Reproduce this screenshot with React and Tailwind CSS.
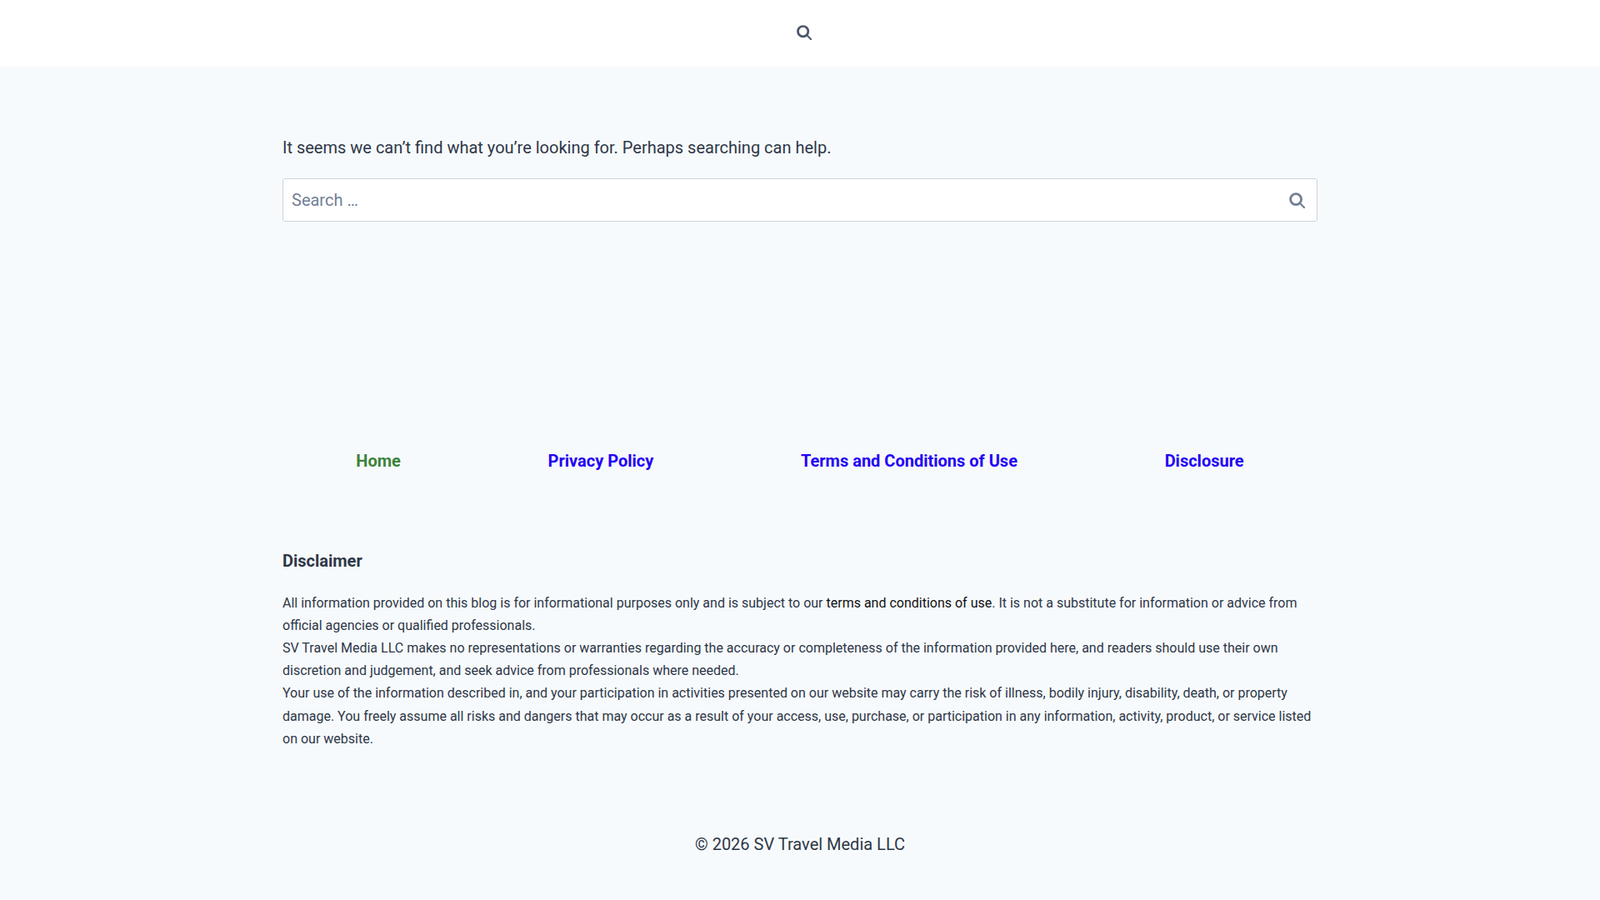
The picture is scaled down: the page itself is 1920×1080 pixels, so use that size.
const SearchIcon = ({ className }) => (
  <svg viewBox="0 0 24 24" fill="none" stroke="currentColor" className={className}>
    <circle cx="10.2" cy="10.2" r="8.2" strokeWidth="3.6" />
    <path d="M16.5 16.5L22.7 22.7" strokeWidth="2.8" strokeLinecap="round" />
  </svg>
);

const navLinks = [
  { label: "Home", color: "text-[#3b833b]" },
  { label: "Privacy Policy", color: "text-[#2300f5]" },
  { label: "Terms and Conditions of Use", color: "text-[#2300f5]" },
  { label: "Disclosure", color: "text-[#2300f5]" },
];

const App = () => {
  return (
    <div className="min-h-screen bg-[#f7fafc] font-['Roboto',sans-serif] text-[#2d3748]">
      <header className="h-20 pl-[10px] pb-[2px] bg-white flex items-center justify-center">
        <SearchIcon className="w-[18px] h-[18px] text-[#4a5568]" />
      </header>

      <main className="w-[1242px] mx-auto">
        <p className="pt-[81px] text-[20px] leading-[32px]">
          It seems we can’t find what you’re looking for. Perhaps searching can help.
        </p>
        <form className="relative mt-[21px]">
          <input
            type="text"
            placeholder="Search …"
            className="w-full h-[52px] px-[10px] bg-white border border-[#cbd5e0] rounded-[3px] text-[20px] placeholder:text-[#718096] outline-none"
          />
          <SearchIcon className="absolute right-[15.5px] top-[17px] w-[19px] h-[19px] text-[#718096]" />
        </form>

        <nav className="mt-[271px] flex justify-around">
          {navLinks.map((link) => (
            <a key={link.label} href="#" className={`text-[20px] leading-[32px] font-bold ${link.color}`}>
              {link.label}
            </a>
          ))}
        </nav>

        <h2 className="mt-[88px] text-[20px] leading-[32px] font-bold">Disclaimer</h2>
        <div className="mt-[20.6px] text-[16px] leading-[27.2px]">
          <p>
            All information provided on this blog is for informational purposes only and is subject to our{" "}
            <a href="#" className="text-[#111]">terms and conditions of use</a>. It is not a substitute for
            information or advice from official agencies or qualified professionals.
          </p>
          <p>
            SV Travel Media LLC makes no representations or warranties regarding the accuracy or completeness of
            the information provided here, and readers should use their own discretion and judgement, and seek
            advice from professionals where needed.
          </p>
          <p>
            Your use of the information described in, and your participation in activities presented on our
            website may carry the risk of illness, bodily injury, disability, death, or property damage. You freely
            assume all risks and dangers that may occur as a result of your access, use, purchase, or participation
            in any information, activity, product, or service listed on our website.
          </p>
        </div>
      </main>

      <footer className="pt-[97.4px] pb-[51px] text-center text-[20px] leading-[32px]">
        © 2026 SV Travel Media LLC
      </footer>
    </div>
  );
};

export default App;
